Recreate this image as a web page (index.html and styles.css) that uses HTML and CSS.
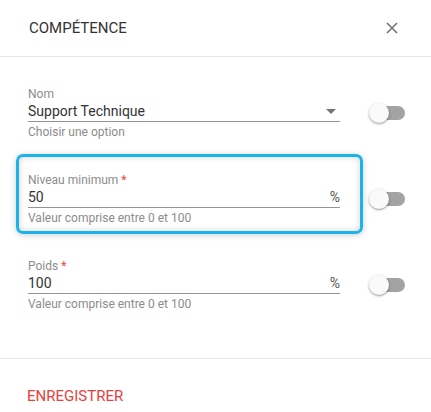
FILE: index.html
```html
<!DOCTYPE html>
<html lang="fr">
<head>
  <meta charset="UTF-8" />
  <meta name="viewport" content="width=device-width, initial-scale=1.0"/>
  <title>Compétence</title>
  <link rel="stylesheet" href="styles.css">
</head>
<body>
  <div class="dialog">
    <!-- En-tête -->
    <div class="dialog-header">
      <h2>COMPÉTENCE</h2>
      <button class="close-btn" aria-label="Fermer">
        <svg width="12" height="12" viewBox="0 0 12 12">
          <path d="M1 1 L11 11 M11 1 L1 11" stroke="#707070" stroke-width="1.5" fill="none"/>
        </svg>
      </button>
    </div>

    <!-- Champs -->
    <div class="dialog-content">
      <div class="row">
        <div class="field">
          <label>Nom</label>
          <div class="input">
            <span class="value">Support Technique</span>
            <span class="arrow"></span>
          </div>
          <div class="hint">Choisir une option</div>
        </div>
        <div class="toggle"><span class="thumb"></span></div>
      </div>

      <div class="row">
        <div class="field highlight">
          <label>Niveau minimum <span class="req">*</span></label>
          <div class="input">
            <span class="value">50</span>
            <span class="suffix">%</span>
          </div>
          <div class="hint">Valeur comprise entre 0 et 100</div>
        </div>
        <div class="toggle"><span class="thumb"></span></div>
      </div>

      <div class="row">
        <div class="field">
          <label>Poids <span class="req">*</span></label>
          <div class="input">
            <span class="value">100</span>
            <span class="suffix">%</span>
          </div>
          <div class="hint">Valeur comprise entre 0 et 100</div>
        </div>
        <div class="toggle"><span class="thumb"></span></div>
      </div>
    </div>

    <!-- Actions -->
    <div class="dialog-actions">
      <button class="save-btn">ENREGISTRER</button>
    </div>
  </div>
</body>
</html>
```

FILE: styles.css
```css
body {
  margin: 0;
  background: #fff;
  font-family: Roboto, "Noto Sans", sans-serif;
  color: #333;
}

.dialog {
  width: 431px;
}

.dialog-header {
  display: flex;
  align-items: center;
  justify-content: space-between;
  height: 56px;
  padding: 0 28px 0 29px;
  border-bottom: 1px solid #e6e6e6;
}

.dialog-header h2 {
  margin: 0 0 1px;
  font-size: 15px;
  font-weight: 400;
  color: #333;
}

.close-btn {
  background: none;
  border: none;
  padding: 0;
  margin-right: 5px;
  width: 12px;
  height: 12px;
  cursor: pointer;
  display: flex;
}

.dialog-content {
  padding: 30px 0 47px 28px;
  display: flex;
  flex-direction: column;
  gap: 34px;
}

.row {
  display: flex;
  align-items: flex-start;
}

.field {
  position: relative;
  width: 312px;
}

.field label {
  display: block;
  font-size: 12px;
  line-height: 14px;
  color: #8c8c8c;
}

.req {
  color: #f44336;
}

.input {
  display: flex;
  align-items: center;
  justify-content: space-between;
  height: 20px;
  border-bottom: 1px solid #949494;
}

.value {
  font-size: 14px;
  color: #333;
}

.suffix {
  font-size: 14px;
  color: #555;
}

.arrow {
  width: 0;
  height: 0;
  margin-right: 4px;
  border-left: 5px solid transparent;
  border-right: 5px solid transparent;
  border-top: 5px solid #757575;
}

.hint {
  margin-top: 3px;
  font-size: 12px;
  line-height: 14px;
  color: #8c8c8c;
}

/* cadre de mise en avant */
.field.highlight::before {
  content: "";
  position: absolute;
  top: -19px;
  left: -12px;
  right: -23px;
  bottom: -9px;
  border: 3px solid #1ab4ea;
  border-radius: 7px;
  box-shadow: inset 0 0 6px rgba(0, 0, 0, 0.18), 0 1px 6px rgba(0, 0, 0, 0.2);
  pointer-events: none;
}

.toggle {
  position: relative;
  width: 34px;
  height: 14px;
  margin: 19px 0 0 31px;
  background: #a3a3a3;
  border-radius: 7px;
}

.thumb {
  position: absolute;
  top: -3px;
  left: -2px;
  width: 20px;
  height: 20px;
  border-radius: 50%;
  background: #fafafa;
  box-shadow: 0 1px 3px rgba(0, 0, 0, 0.3), 0 1px 1px rgba(0, 0, 0, 0.14);
}

.dialog-actions {
  border-top: 1px solid #e6e6e6;
  padding: 27px 27px 10px;
}

.save-btn {
  background: none;
  border: none;
  padding: 0;
  font-family: Roboto, "Noto Sans", sans-serif;
  font-size: 15px;
  color: #e8403d;
  cursor: pointer;
}
```
